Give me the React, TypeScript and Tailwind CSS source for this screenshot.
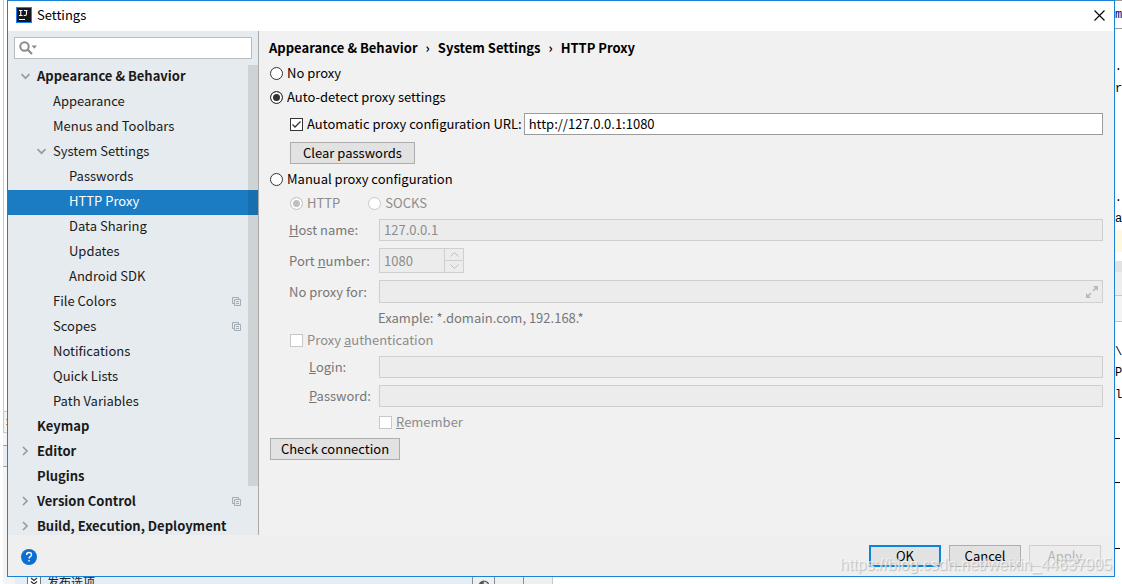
import type { ReactNode } from 'react';
import clsx from 'clsx';

type TreeItem = {
  label: string;
  level: 0 | 1 | 2;
  arrow?: 'open' | 'closed';
  selected?: boolean;
  perProject?: boolean;
};

const TREE: TreeItem[] = [
  { label: 'Appearance & Behavior', level: 0, arrow: 'open' },
  { label: 'Appearance', level: 1 },
  { label: 'Menus and Toolbars', level: 1 },
  { label: 'System Settings', level: 1, arrow: 'open' },
  { label: 'Passwords', level: 2 },
  { label: 'HTTP Proxy', level: 2, selected: true },
  { label: 'Data Sharing', level: 2 },
  { label: 'Updates', level: 2 },
  { label: 'Android SDK', level: 2 },
  { label: 'File Colors', level: 1, perProject: true },
  { label: 'Scopes', level: 1, perProject: true },
  { label: 'Notifications', level: 1 },
  { label: 'Quick Lists', level: 1 },
  { label: 'Path Variables', level: 1 },
  { label: 'Keymap', level: 0 },
  { label: 'Editor', level: 0, arrow: 'closed' },
  { label: 'Plugins', level: 0 },
  { label: 'Version Control', level: 0, arrow: 'closed', perProject: true },
  { label: 'Build, Execution, Deployment', level: 0, arrow: 'closed' },
];

const INDENT = { 0: 'pl-3', 1: 'pl-7', 2: 'pl-11' } as const;

/** Slices of the editor that stay visible to the right of the dialog. */
const EDITOR_SLICES: { box: string; text?: string }[] = [
  { box: 'h-[29px] border-y border-[#999] text-[#000060]', text: 'm' },
  { box: 'h-7' },
  { box: 'h-5 justify-end', text: 'x.' },
  { box: 'h-6', text: 'r' },
  { box: 'h-[87px]' },
  { box: 'h-5 justify-end', text: 'x.' },
  { box: 'h-[22px]', text: 'ar' },
  { box: 'h-[22px] bg-[#fff8e0]' },
  { box: 'h-[9px]' },
  { box: 'h-[11px] bg-[#e3e3e3]' },
  { box: 'h-6 border-b border-[#c8c8c8] bg-[#eee]' },
  { box: 'h-[26px] border-b border-[#c8c8c8] bg-[#f4f4f4]' },
  { box: 'h-5' },
  { box: 'h-5', text: '\\d' },
  { box: 'h-[22px]', text: 'P' },
  { box: 'h-[22px]', text: 'l' },
  { box: 'h-[33px] w-[5px] border-b border-black' },
  { box: 'h-11 w-[5px] border-b border-black' },
  { box: 'h-[66px] w-[5px] border-b border-black' },
];

function Arrow({ kind }: { kind?: 'open' | 'closed' }) {
  return (
    <svg viewBox="0 0 12 12" className="mr-[5px] size-3 shrink-0" aria-hidden="true">
      {kind === 'open' && (
        <path d="M1.5 4.2 5.5 8.2 9.5 4.2" fill="none" stroke="#9a9da0" strokeWidth="1.7" />
      )}
      {kind === 'closed' && (
        <path d="M3 2 7 6 3 10" fill="none" stroke="#9a9da0" strokeWidth="1.7" />
      )}
    </svg>
  );
}

function ProjectIcon() {
  return (
    <svg viewBox="0 0 9 9" className="size-[9px]" fill="none" stroke="#a3adb5" aria-hidden="true">
      <path d="M2 6.5H.5V.5h6V2" />
      <path d="M2.5 2.5h6v6h-6zM4 4.5h3M4 6.5h3" />
    </svg>
  );
}

function Radio({ label, name, checked, disabled }: { label: string; name: string; checked?: boolean; disabled?: boolean }) {
  return (
    <label className={clsx('flex items-center gap-1', disabled && 'text-[#8c8c8c]')}>
      <input
        type="radio"
        name={name}
        defaultChecked={checked}
        disabled={disabled}
        className="size-[13px] appearance-none rounded-full border border-[#333] bg-white checked:bg-[#333] checked:shadow-[inset_0_0_0_2px_white] disabled:border-[#c8c8c8] disabled:checked:bg-[#c0c0c0]"
      />
      {label}
    </label>
  );
}

function Check({ children, checked, disabled }: { children: ReactNode; checked?: boolean; disabled?: boolean }) {
  return (
    <label className={clsx('flex shrink-0 items-center gap-1', disabled && 'text-[#8c8c8c]')}>
      <span className="grid size-[13px]">
        <input
          type="checkbox"
          defaultChecked={checked}
          disabled={disabled}
          className="peer col-start-1 row-start-1 size-[13px] appearance-none border border-[#333] bg-white disabled:border-[#c8c8c8]"
        />
        <svg
          viewBox="0 0 13 13"
          className="pointer-events-none invisible col-start-1 row-start-1 size-[13px] peer-checked:visible"
          fill="none"
          stroke="#333"
          strokeWidth="1.3"
          aria-hidden="true"
        >
          <path d="M2.5 6.5 5 9 10.5 3.5" />
        </svg>
      </span>
      <span>{children}</span>
    </label>
  );
}

function FieldLabel({ htmlFor, nested, children }: { htmlFor: string; nested?: boolean; children: ReactNode }) {
  return (
    <label htmlFor={htmlFor} className={clsx('shrink-0 text-[#777]', nested ? 'ml-10 w-[70px]' : 'ml-5 w-[90px]')}>
      {children}
    </label>
  );
}

const DISABLED_FIELD = 'min-w-0 flex-1 border border-[#cfcfcf] bg-[#ececec] px-1 text-[#8c8c8c]';
const BUTTON = 'h-[22px] border border-[#adadad] bg-[#e2e2e2]';

function Sidebar() {
  return (
    <aside className="relative flex w-[251px] shrink-0 flex-col border-r border-[#a9a9a9] bg-[#e6ebef]">
      <div className="m-1.5 flex h-[22px] shrink-0 items-center border border-[#b9bcbe] bg-white pl-1">
        <svg viewBox="0 0 19 14" className="h-3.5 w-[19px] shrink-0" aria-hidden="true">
          <circle cx="5.5" cy="5.5" r="4.2" fill="none" stroke="#8c8c8c" strokeWidth="2" />
          <path d="M8.5 8.5 13 13" stroke="#8c8c8c" strokeWidth="2.2" />
          <path d="M12.5 4.5h5.5l-2.75 3.2z" fill="#8c8c8c" />
        </svg>
        <input type="text" aria-label="Search settings" className="h-full min-w-0 flex-1 outline-none" />
      </div>
      <ul className="min-h-0 flex-1 overflow-hidden">
        {TREE.map((item) => (
          <li
            key={item.label}
            className={clsx(
              'flex h-[25px] items-center pr-[17px] pb-[3px]',
              INDENT[item.level],
              item.level === 0 && 'font-bold',
              item.selected ? 'bg-[#1b7cc4] text-white' : 'text-[#1a1a1a]',
            )}
          >
            <Arrow kind={item.arrow} />
            <span className="flex-1 whitespace-nowrap">{item.label}</span>
            {item.perProject && <ProjectIcon />}
          </li>
        ))}
      </ul>
      <div className="absolute top-[34px] right-0 h-[421px] w-2.5 bg-black/10" />
    </aside>
  );
}

function ProxyForm() {
  return (
    <main className="min-w-0 flex-1 overflow-hidden bg-[#f1f1f1] pt-1 pr-[11px] pl-2.5">
      <nav aria-label="Breadcrumb">
        <ol className="flex h-[26px] items-center gap-2 font-bold">
          <li>Appearance &amp; Behavior</li>
          <li aria-hidden="true">›</li>
          <li>System Settings</li>
          <li aria-hidden="true">›</li>
          <li aria-current="page">HTTP Proxy</li>
        </ol>
      </nav>

      <form>
        <div className="flex h-6 items-center pl-px">
          <Radio name="mode" label="No proxy" />
        </div>
        <div className="flex h-6 items-center pl-px">
          <Radio name="mode" label="Auto-detect proxy settings" checked />
        </div>
        <div className="mt-1 flex h-[22px] items-center gap-0.5 pl-[21px]">
          <Check checked>Automatic proxy configuration URL:</Check>
          <input
            type="text"
            aria-label="Automatic proxy configuration URL"
            defaultValue="http://127.0.0.1:1080"
            className="h-full min-w-0 flex-1 border border-[#9c9c9c] bg-white px-1 pb-0.5 outline-none"
          />
        </div>
        <div className="mt-[7px] pl-[21px]">
          <button type="button" className={clsx(BUTTON, 'block w-[125px]')}>
            Clear passwords
          </button>
        </div>

        <div className="mt-[3px] flex h-6 items-center pl-px">
          <Radio name="mode" label="Manual proxy configuration" />
        </div>
        <div className="flex h-6 items-center gap-7 pl-[21px]">
          <Radio name="protocol" label="HTTP" checked disabled />
          <Radio name="protocol" label="SOCKS" disabled />
        </div>

        <div className="mt-1 flex h-[22px] items-center">
          <FieldLabel htmlFor="host">
            <u>H</u>ost name:
          </FieldLabel>
          <input id="host" type="text" defaultValue="127.0.0.1" disabled className={clsx(DISABLED_FIELD, 'h-full pb-0.5')} />
        </div>
        <div className="mt-[7px] flex h-[25px] items-center">
          <FieldLabel htmlFor="port">
            Port <u>n</u>umber:
          </FieldLabel>
          <div className="flex h-full w-[85px] border border-[#cfcfcf] bg-[#ececec]">
            <input id="port" type="text" defaultValue="1080" disabled className="min-w-0 flex-1 px-1 text-[#8c8c8c]" />
            <div className="flex w-[19px] flex-col border-l border-[#cfcfcf]">
              <button type="button" disabled aria-label="Increase" className="flex flex-1 items-center justify-center border-b border-[#cfcfcf]">
                <svg viewBox="0 0 9 5" className="h-[5px] w-[9px]" fill="none" stroke="#bdbdbd" aria-hidden="true">
                  <path d="M.5 4.5 4.5.5l4 4" />
                </svg>
              </button>
              <button type="button" disabled aria-label="Decrease" className="flex flex-1 items-center justify-center">
                <svg viewBox="0 0 9 5" className="h-[5px] w-[9px]" fill="none" stroke="#bdbdbd" aria-hidden="true">
                  <path d="m.5.5 4 4 4-4" />
                </svg>
              </button>
            </div>
          </div>
        </div>
        <div className="mt-[7px] flex h-[23px] items-center">
          <FieldLabel htmlFor="exclude">No proxy for:</FieldLabel>
          <div className="flex h-full min-w-0 flex-1 items-center border border-[#cfcfcf] bg-[#ececec] pr-1">
            <input id="exclude" type="text" disabled className="h-full min-w-0 flex-1 px-1" />
            <svg viewBox="0 0 12 12" className="size-3" aria-hidden="true">
              <path d="M7 0h5v5zM0 7v5h5z" fill="#b4bac0" />
              <path d="M10.5 1.5 7 5M1.5 10.5 5 7" stroke="#b4bac0" strokeWidth="1.6" />
            </svg>
          </div>
        </div>
        <p className="mt-[3px] flex h-[23px] items-center pl-[109px] text-[#777]">Example: *.domain.com, 192.168.*</p>

        <div className="flex h-[22px] items-center pl-[21px]">
          <Check disabled>
            Proxy <u>a</u>uthentication
          </Check>
        </div>
        <div className="mt-[5px] flex h-[22px] items-center">
          <FieldLabel htmlFor="login" nested>
            <u>L</u>ogin:
          </FieldLabel>
          <input id="login" type="text" disabled className={clsx(DISABLED_FIELD, 'h-full')} />
        </div>
        <div className="mt-[7px] flex h-[22px] items-center">
          <FieldLabel htmlFor="password" nested>
            <u>P</u>assword:
          </FieldLabel>
          <input id="password" type="password" disabled className={clsx(DISABLED_FIELD, 'h-full')} />
        </div>
        <div className="mt-1 flex h-[22px] items-center pl-[110px]">
          <Check disabled>
            <u>R</u>emember
          </Check>
        </div>
        <button type="button" className={clsx(BUTTON, 'mt-[5px] ml-px block w-[130px]')}>
          Check connection
        </button>
      </form>
    </main>
  );
}

function Dialog() {
  return (
    <div className="relative flex min-w-0 flex-1 flex-col border border-[#1a82d7]">
      <header className="flex h-[30px] shrink-0 items-center bg-white pr-[9px] pb-0.5 pl-2">
        <svg viewBox="0 0 16 16" className="size-4" aria-hidden="true">
          <rect width="16" height="16" fill="#1b7ff0" />
          <rect x="1" y="1" width="14" height="14" fill="#16161c" />
          <path d="M3 3.5h3.5M4.75 3.5v5M3 8.5h3.5M8 3.5h3.5M10.5 3.5v3.5q0 1.5-1.5 1.5H7.7M3 12.5h6" fill="none" stroke="#fff" strokeWidth="1.1" />
        </svg>
        <h1 className="flex-1 pl-[5px]">Settings</h1>
        <button type="button" aria-label="Close">
          <svg viewBox="0 0 11 11" className="size-[11px]" stroke="#000" strokeWidth="1.1" aria-hidden="true">
            <path d="m.5.5 10 10M10.5.5l-10 10" />
          </svg>
        </button>
      </header>
      <div className="flex min-h-0 flex-1">
        <Sidebar />
        <ProxyForm />
      </div>
      <footer className="flex h-[41px] shrink-0 items-center gap-2 bg-[#efefef] px-[13px]">
        <button type="button" aria-label="Help" className="mr-auto pt-0.5">
          <svg viewBox="0 0 16 16" className="size-4" aria-hidden="true">
            <circle cx="8" cy="8" r="8" fill="#0a6fd0" />
            <path d="M5.6 6q0-2.5 2.5-2.5T10.5 5.8q0 1.2-1.2 1.9T8 9.6M8 11v1.6" fill="none" stroke="#fff" strokeWidth="1.4" />
          </svg>
        </button>
        <button type="button" className="h-[22px] w-[72px] border-2 border-[#0a84dc] bg-[#e2e2e2]">
          OK
        </button>
        <button type="button" className={clsx(BUTTON, 'w-[72px]')}>
          Cancel
        </button>
        <button type="button" disabled className="h-[22px] w-[72px] border border-[#cfcfcf] bg-[#ececec] text-[#b4b4b4]">
          Apply
        </button>
      </footer>
      <div className="pointer-events-none absolute right-0.5 bottom-0 font-['Liberation_Sans'] text-base leading-[22px] text-white/60 [text-shadow:1px_1px_1px_#bbb]">
        https://blog.csdn.net/weixin_44637905
      </div>
    </div>
  );
}

export default function App() {
  return (
    <div className="flex h-screen flex-col overflow-hidden bg-white font-['Noto_Sans_CJK_SC',sans-serif] text-[13px] leading-[18px] text-black">
      <div className="flex min-h-0 flex-1">
        <div className="flex w-[7px] shrink-0 flex-col pl-[3px]">
          <div className="h-[411px] border-l border-[#c8c8c8]" />
          <div className="flex h-[22px] flex-col justify-center gap-1 border border-r-0 border-[#c8c8c8] bg-[#f4f4f4] pl-0.5">
            <div className="h-px bg-[#d08a20]" />
            <div className="h-px bg-[#d08a20]" />
          </div>
          <div className="h-3 bg-[#f4f4f4]" />
          <div className="h-[22px] border-y border-[#9aa0a8] bg-[#e5eef7]" />
          <div className="flex-1 bg-[#f4f4f4]" />
        </div>
        <Dialog />
        <div className="flex w-[7px] shrink-0 flex-col overflow-hidden font-['Liberation_Mono',monospace] text-xs">
          {EDITOR_SLICES.map((slice, i) => (
            <div key={i} className={clsx('flex shrink-0 items-center', slice.box)}>
              {slice.text}
            </div>
          ))}
        </div>
      </div>
      <div className="flex h-[7px] shrink-0 overflow-hidden pl-[3px]">
        <div className="w-3 bg-[#f4f4f4]" />
        <div className="flex w-[457px] items-start bg-[#e5eef7] pl-3">
          <svg viewBox="0 0 14 14" className="size-3.5 shrink-0" aria-hidden="true">
            <path d="M.5 0v13.5h13V0" fill="#fff" stroke="#777" />
            <path d="m4 1 3 2.5L10 1M4 4.5 7 7l3-2.5" fill="none" stroke="#333" strokeWidth="1.2" />
          </svg>
          <span className="pl-1.5 text-xs leading-[10px] text-[#222]">发布选项</span>
        </div>
        <div className="flex w-[23px] justify-center border-x border-[#8a8f96] bg-[#efefef] pt-[3px]">
          <svg viewBox="0 0 12 12" className="size-3 shrink-0" aria-hidden="true">
            <circle cx="6" cy="6" r="5.5" fill="#555" />
            <path d="M6 1.5q4 .5 4.5 5L7 6 5.5 3.5z" fill="#ddd" />
          </svg>
        </div>
        <div className="w-[29px] border-r border-[#8a8f96] bg-[#efefef]" />
        <div className="w-[29px] border-r border-[#c8c8c8] bg-[#efefef]" />
      </div>
    </div>
  );
}
